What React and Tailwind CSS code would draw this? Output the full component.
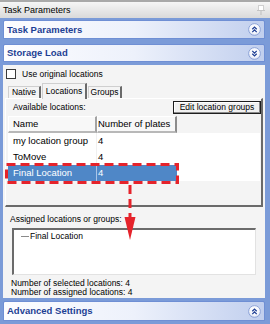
import React from "react";

function Chevron({ up }) {
  return (
    <svg width="13" height="13" viewBox="0 0 13 13" className="shrink-0">
      <defs>
        <radialGradient id={up ? "cg1" : "cg2"} cx="0.5" cy="0.4" r="0.6">
          <stop offset="0" stopColor="#ffffff" />
          <stop offset="0.7" stopColor="#f4f6fc" />
          <stop offset="1" stopColor="#c9d3ec" />
        </radialGradient>
      </defs>
      <circle cx="6.5" cy="6.5" r="5.9" fill={`url(#${up ? "cg1" : "cg2"})`} stroke="#8ea4d8" strokeWidth="1" />
      {up ? (
        <path d="M4.3 6.3 L6.5 4.1 L8.7 6.3 M4.3 9.1 L6.5 6.9 L8.7 9.1" fill="none" stroke="#1f3f94" strokeWidth="1.3" />
      ) : (
        <path d="M4.3 3.9 L6.5 6.1 L8.7 3.9 M4.3 6.7 L6.5 8.9 L8.7 6.7" fill="none" stroke="#1f3f94" strokeWidth="1.3" />
      )}
    </svg>
  );
}

function Pin() {
  return (
    <svg width="8" height="10" viewBox="0 0 8 10" className="shrink-0">
      <rect x="1.5" y="0.5" width="5" height="5" fill="#ffffff" stroke="#cfcfcf" />
      <line x1="0" y1="5.5" x2="8" y2="5.5" stroke="#c4c4c4" />
      <line x1="4" y1="6" x2="4" y2="10" stroke="#bdbdbd" />
    </svg>
  );
}

function Header({ title, up, h }) {
  return (
    <div
      className={`${h} shrink-0 border border-[#6f8fd4] rounded-t-[2px] bg-gradient-to-r from-[#fdfdff] via-[#edf1fb] to-[#c1cfee] flex items-center justify-between pl-[3px] pr-[3px]`}
    >
      <span className="text-[9.5px] font-bold text-[#1d3f94] leading-none">{title}</span>
      <Chevron up={up} />
    </div>
  );
}

function Tab({ label, selected, w }) {
  return (
    <div
      className={`${w} ${
        selected ? "h-[16px] mb-[-1px] bg-[#f4f4f4] relative z-10" : "h-[12px] bg-[#f4f4f4]"
      } border-t border-l border-t-[#cfcfcf] border-l-[#cfcfcf] border-r-2 border-r-[#6a6a6a] flex items-center justify-center text-[8.5px] leading-none`}
    >
      {label}
    </div>
  );
}

function Row({ name, num, selected }) {
  return (
    <div className="h-[16px] flex">
      <div
        className={`w-[89px] flex items-center pl-[5px] text-[9.5px] leading-none ${
          selected ? "bg-[#4f87c7] text-white border-r border-r-[#a9c4e6]" : "border-r border-r-[#f0f0f0]"
        }`}
      >
        {name}
      </div>
      <div
        className={`w-[80px] flex items-center pl-[1px] text-[9.5px] leading-none ${
          selected ? "bg-[#4f87c7] text-white" : ""
        }`}
      >
        {num}
      </div>
    </div>
  );
}

function Content() {
  return (
    <div className="h-[233px] shrink-0 bg-[#f4f4f4] flex flex-col">
      <div className="flex items-center h-[10px] mt-[4px] pl-[3px]">
        <div className="w-[10px] h-[10px] bg-white border border-[#3a3a3a]" />
        <span className="ml-[6px] text-[8.5px] leading-none">Use original locations</span>
      </div>
      <div className="mt-[4px] h-[15px] flex items-end pl-[5px] gap-[1px]">
        <Tab label="Native" w="w-[33px]" />
        <Tab label="Locations" w="w-[45px]" selected />
        <Tab label="Groups" w="w-[34px]" />
      </div>
      <div className="h-[109px] shrink-0 mx-[2px] border-t border-l border-r-2 border-b-2 border-t-white border-l-white border-r-[#6a6a6a] border-b-[#6a6a6a] flex flex-col">
        <div className="mt-[2px] h-[13px] flex items-center justify-between pl-[7px]">
          <span className="text-[8.5px] leading-none">Available locations:</span>
          <div className="h-[13px] w-[88px] border border-[#1e1e1e] bg-[#f0f0f0] shadow-[inset_-1px_-1px_0_#8a8a8a,inset_1px_1px_0_#ffffff] flex items-center justify-center text-[8.5px] leading-none">
            Edit location groups
          </div>
        </div>
        <div className="mt-[2px] ml-[2px] mr-[1px] flex flex-col">
          <div className="h-[17px] flex">
            <div className="w-[89px] bg-[#f8f8f8] border-t border-l border-t-white border-l-white border-r-2 border-b-2 border-r-[#a3a3a3] border-b-[#b8b8b8] flex items-center pl-[4px] text-[9.5px] leading-none">
              Name
            </div>
            <div className="w-[80px] bg-[#f8f8f8] border-t border-l border-t-white border-l-white border-r-2 border-b-2 border-r-[#8c8c8c] border-b-[#b8b8b8] flex items-center pl-[0px] text-[9.5px] leading-none whitespace-nowrap">
              Number of plates
            </div>
          </div>
          <div className="h-[48px] bg-white flex flex-col">
            <Row name="my location group" num="4" />
            <Row name="ToMove" num="4" />
            <Row name="Final Location" num="4" selected />
          </div>
        </div>
      </div>
      <div className="mt-[6px] h-[12px] flex items-center pl-[7px] text-[8.5px] leading-none">
        Assigned locations or groups:
      </div>
      <div className="mt-[3px] ml-[9px] w-[244px] h-[47px] bg-white border-t-2 border-l-2 border-r border-b border-t-[#6b6b6b] border-l-[#6b6b6b] border-r-[#e2e2e2] border-b-[#e2e2e2] flex flex-col">
        <div className="mt-[1px] h-[11px] flex items-center pl-[7px]">
          <div className="w-[8px] h-px bg-[#8a8a8a]" />
          <span className="ml-[1px] text-[8.5px] leading-none">Final Location</span>
        </div>
      </div>
      <div className="mt-[4px] pl-[8px] flex flex-col text-[8.5px] leading-[9px]">
        <span>Number of selected locations: 4</span>
        <span>Number of assigned locations: 4</span>
      </div>
    </div>
  );
}

function Annotation() {
  return (
    <svg width="270" height="324" viewBox="0 0 270 324" className="absolute left-0 top-0 pointer-events-none">
      <rect x="6.5" y="164.5" width="171" height="18" fill="none" stroke="#e5232b" strokeWidth="3" strokeDasharray="9 5" />
      <line x1="130" y1="185" x2="130" y2="217" stroke="#e5232b" strokeWidth="3" strokeDasharray="9 5" />
      <polygon points="124.5,217 135.5,217 130,240" fill="#e5232b" />
    </svg>
  );
}

export default function App() {
  return (
    <div className="relative w-[270px] h-[324px] overflow-hidden bg-[#7b9bd8] flex flex-col font-['Liberation_Sans',Arial,sans-serif] text-black">
      <div className="h-[18px] shrink-0 border-t-2 border-[#a9a9a9] bg-gradient-to-b from-[#f6f6f6] to-[#dadada] flex items-center justify-between pl-[3px] pr-[5px]">
        <span className="text-[9px] leading-none">Task Parameters</span>
        <Pin />
      </div>
      <div className="flex-1 flex flex-col pl-[3px] pr-[5px] pt-[2px]">
        <Header title="Task Parameters" up h="h-[19px]" />
        <div className="h-[5px] shrink-0" />
        <Header title="Storage Load" h="h-[18px]" />
        <div className="h-[3px] shrink-0" />
        <Content />
        <div className="h-[3px] shrink-0" />
        <Header title="Advanced Settings" up h="h-[20px]" />
      </div>
      <Annotation />
    </div>
  );
}
